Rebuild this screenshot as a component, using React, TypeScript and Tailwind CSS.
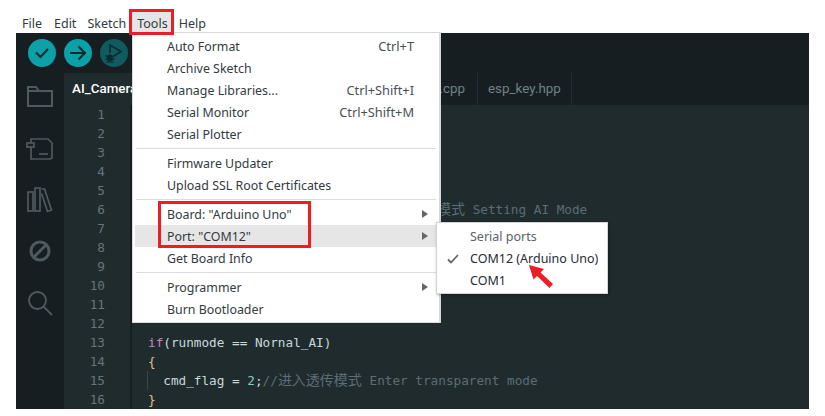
const UI = "font-['Noto_Sans',sans-serif]";

type MenuRow = { label?: string; shortcut?: string; arrow?: boolean; hover?: boolean; sep?: boolean };

const menuRows: MenuRow[] = [
  { label: 'Auto Format', shortcut: 'Ctrl+T' },
  { label: 'Archive Sketch' },
  { label: 'Manage Libraries...', shortcut: 'Ctrl+Shift+I' },
  { label: 'Serial Monitor', shortcut: 'Ctrl+Shift+M' },
  { label: 'Serial Plotter' },
  { sep: true },
  { label: 'Firmware Updater' },
  { label: 'Upload SSL Root Certificates' },
  { sep: true },
  { label: 'Board: "Arduino Uno"', arrow: true },
  { label: 'Port: "COM12"', arrow: true, hover: true },
  { label: 'Get Board Info' },
  { sep: true },
  { label: 'Programmer', arrow: true },
  { label: 'Burn Bootloader' },
];

function ToolsMenu() {
  return (
    <div className="absolute left-[132px] top-[32px] z-10 w-[309px] h-[291px] bg-white border border-[#d9d9dc] border-r-[2px] pt-[2px] px-[2px]">
      {menuRows.map((row, i) =>
        row.sep ? (
          <div key={i} className="h-[7px] flex items-center px-[1px]">
            <div className="h-px w-full bg-[#dcdcdc]" />
          </div>
        ) : (
          <div
            key={i}
            className={`h-[22px] flex items-center pt-[2px] pl-[32px] pr-[23px] text-[12.4px] text-[#333a40] ${row.hover ? 'bg-[#e6e6e6]' : ''}`}
          >
            <span className="flex-1 whitespace-nowrap">{row.label}</span>
            {row.shortcut && <span className="text-[12.8px] text-[#4a4f55] whitespace-nowrap">{row.shortcut}</span>}
            {row.arrow && (
              <svg width="6" height="8" viewBox="0 0 6 8" className="-mr-[14px] -mt-[2px]">
                <path d="M0 0l6 4-6 4z" fill="#666" />
              </svg>
            )}
          </div>
        ),
      )}
    </div>
  );
}

function PortsMenu() {
  return (
    <div className="absolute left-[436px] top-[222px] z-20 w-[172px] h-[72px] bg-white border border-[#d4d4d4] shadow-[1px_1px_3px_rgba(0,0,0,0.35)] text-[12.5px]">
      <div className="h-[22px] mt-[3px] pl-[33px] flex items-center text-[#5c6268]">Serial ports</div>
      <div className="h-[22px] pl-[33px] flex items-center text-[#262c33] relative whitespace-nowrap">
        <svg width="12" height="10" viewBox="0 0 12 10" className="absolute left-[10px] top-[6px]">
          <path d="M1 5.500l3 3 7-7.500" fill="none" stroke="#666" strokeWidth="1.800" />
        </svg>
        COM12 (Arduino Uno)
      </div>
      <div className="h-[22px] pl-[33px] flex items-center text-[#262c33]">COM1</div>
    </div>
  );
}

function ToolbarIcons() {
  return (
    <div className="h-[40px] flex items-center gap-[8px] pl-[12px] bg-[#171e21]">
      <div className="w-[28px] h-[28px] rounded-full bg-[#0ca1a6] flex items-center justify-center">
        <svg width="16" height="12" viewBox="0 0 16 12">
          <path d="M2 5.500l4.500 4.500L14 2" fill="none" stroke="#11282c" strokeWidth="2" />
        </svg>
      </div>
      <div className="w-[28px] h-[28px] rounded-full bg-[#0ca1a6] flex items-center justify-center">
        <svg width="18" height="16" viewBox="0 0 18 16">
          <path d="M1 8h15M9.500 1.500L16 8l-6.500 6.500" fill="none" stroke="#11282c" strokeWidth="2" />
        </svg>
      </div>
      <div className="w-[28px] h-[28px] rounded-full bg-[#0f5b60] flex items-center justify-center">
        <svg width="22" height="22" viewBox="0 0 22 22">
          <path d="M7 11V3l11 6.500L11 14" fill="none" stroke="#0b2a2e" strokeWidth="1.500" />
          <ellipse cx="7" cy="16" rx="3" ry="3.500" fill="#0b2a2e" />
          <path d="M2 14h10M2 17h10M3 20h8" stroke="#0b2a2e" strokeWidth="1" />
        </svg>
      </div>
    </div>
  );
}

function SideIcons() {
  const stroke = '#4d5a60';
  return (
    <div className="w-[48px] shrink-0 bg-[#171e21] flex flex-col items-center">
      <svg width="28" height="24" viewBox="0 0 28 24" className="mt-[11px]" fill="none" stroke={stroke} strokeWidth="2">
        <path d="M2 3h8l3 4h13v15H2z" />
        <path d="M2 7h11" />
      </svg>
      <svg width="28" height="24" viewBox="0 0 28 24" className="mt-[29px]" fill="none" stroke={stroke} strokeWidth="1.700">
        <path d="M5 6V2h17l4 4v15l-2 1H5v-6" />
        <rect x="1" y="6" width="7" height="4" />
        <path d="M13 17h9" />
        <path d="M5 10v6" />
      </svg>
      <svg width="26" height="26" viewBox="0 0 26 26" className="mt-[26px]" fill="none" stroke={stroke} strokeWidth="1.700">
        <rect x="1" y="5" width="5" height="19" />
        <rect x="8" y="1" width="5" height="23" />
        <path d="M14.500 2h3l7 21-4 1.500-6-18" />
      </svg>
      <svg width="24" height="24" viewBox="0 0 24 24" className="mt-[26px]" fill="none" stroke={stroke} strokeWidth="3">
        <circle cx="12" cy="12" r="9" />
        <path d="M6 18L18 6" />
      </svg>
      <svg width="26" height="26" viewBox="0 0 26 26" className="mt-[27px]" fill="none" stroke={stroke} strokeWidth="1.800">
        <circle cx="10.500" cy="10.500" r="8.500" />
        <path d="M17 17l8 8" />
      </svg>
    </div>
  );
}

function CodeLines() {
  const cls = 'h-[19px] leading-[19px] whitespace-pre';
  return (
    <div className="flex-1 pl-[16px] font-['DejaVu_Sans_Mono','Noto_Sans_CJK_SC',monospace] text-[12.7px] text-[#c8d8db] relative">
      {[0, 1, 2, 3, 4].map((n) => (
        <div key={n} className={cls} />
      ))}
      <div className={`${cls} pl-[289px] text-[#5a6e75]`}>
        <span className="text-[14px]">模式</span> Setting AI Mode
      </div>
      {[6, 7, 8, 9, 10, 11].map((n) => (
        <div key={n} className={cls} />
      ))}
      <div className={cls}>
        <span className="text-[#c586c0]">if</span>(runmode == Nornal_AI)
      </div>
      <div className={`${cls} text-[#e2c08d]`}>{'{'}</div>
      <div className={`${cls} relative`}>
        <div className="absolute left-[-1px] top-0 h-full w-px bg-[#3a4649]" />
        {'  cmd_flag = '}
        <span className="text-[#7fcbcd]">2</span>;
        <span className="text-[#5a6e75]">
          //<span className="text-[14px]">进入透传模式</span> Enter transparent mode
        </span>
      </div>
      <div className={`${cls} text-[#e2c08d]`}>{'}'}</div>
    </div>
  );
}

function RedArrow() {
  return (
    <svg width="28" height="26" viewBox="0 0 28 26" className="absolute left-[527px] top-[264px] z-30">
      <path d="M2 1l15 4-3.500 3.500L26 20l-3.500 4L10 12l-3.500 3.500z" fill="#ee1c25" />
    </svg>
  );
}

export default function App() {
  return (
    <div className={`relative w-[825px] h-[416px] bg-white overflow-hidden ${UI}`}>
      <div className="h-[33px] flex items-end text-[12.5px] text-[#333a40] pl-[22px] pb-[1px]">
        <span className="h-[20px] leading-[24px]">File</span>
        <span className="h-[20px] leading-[24px] ml-[12px]">Edit</span>
        <span className="h-[20px] leading-[24px] ml-[11px]">Sketch</span>
        <span className="h-[20px] leading-[24px] ml-[5px] px-[6px] bg-[#e6e6e6]">Tools</span>
        <span className="h-[20px] leading-[24px] ml-[5px]">Help</span>
      </div>

      <div className="mx-[16px] h-[376px] bg-[#171e21] flex flex-col overflow-hidden">
        <ToolbarIcons />
        <div className="flex-1 flex min-h-0">
          <SideIcons />
          <div className="flex-1 flex flex-col min-w-0">
            <div className="h-[32px] flex bg-[#171e21] font-['Roboto',sans-serif] text-[13.4px] text-[#6f8287]">
              <div className="w-[100px] shrink-0 bg-[#202b2e] pl-[8px] flex items-center font-medium text-white whitespace-nowrap overflow-hidden">
                AI_Camera.ino
              </div>
              <div className="w-[314px] shrink-0 flex items-center justify-end pr-[12px] border-r border-[#252d30]">
                <span>w.cpp</span>
              </div>
              <div className="w-[94px] shrink-0 flex items-center pl-[10px] border-r border-[#252d30] whitespace-nowrap">esp_key.hpp</div>
            </div>
            <div className="flex-1 flex bg-[#202b2e] min-h-0">
              <div className="w-[41px] shrink-0 font-['DejaVu_Sans_Mono',monospace] text-[12.7px] text-[#66757a] text-right">
                {Array.from({ length: 16 }, (_, i) => (
                  <div key={i} className="h-[19px] leading-[19px]">
                    {i + 1}
                  </div>
                ))}
              </div>
              <div className="w-[27px] shrink-0 border-r-[2px] border-[#171e21]" />
              <CodeLines />
            </div>
          </div>
        </div>
      </div>

      <ToolsMenu />
      <PortsMenu />
      <RedArrow />
      {/* red annotation boxes */}
      <div className="absolute left-[129px] top-[9px] z-30 w-[45px] h-[26px] border-[3px] border-[#ee1c25]" />
      <div className="absolute left-[158px] top-[201px] z-30 w-[153px] h-[47px] border-[3px] border-[#ee1c25]" />
    </div>
  );
}
